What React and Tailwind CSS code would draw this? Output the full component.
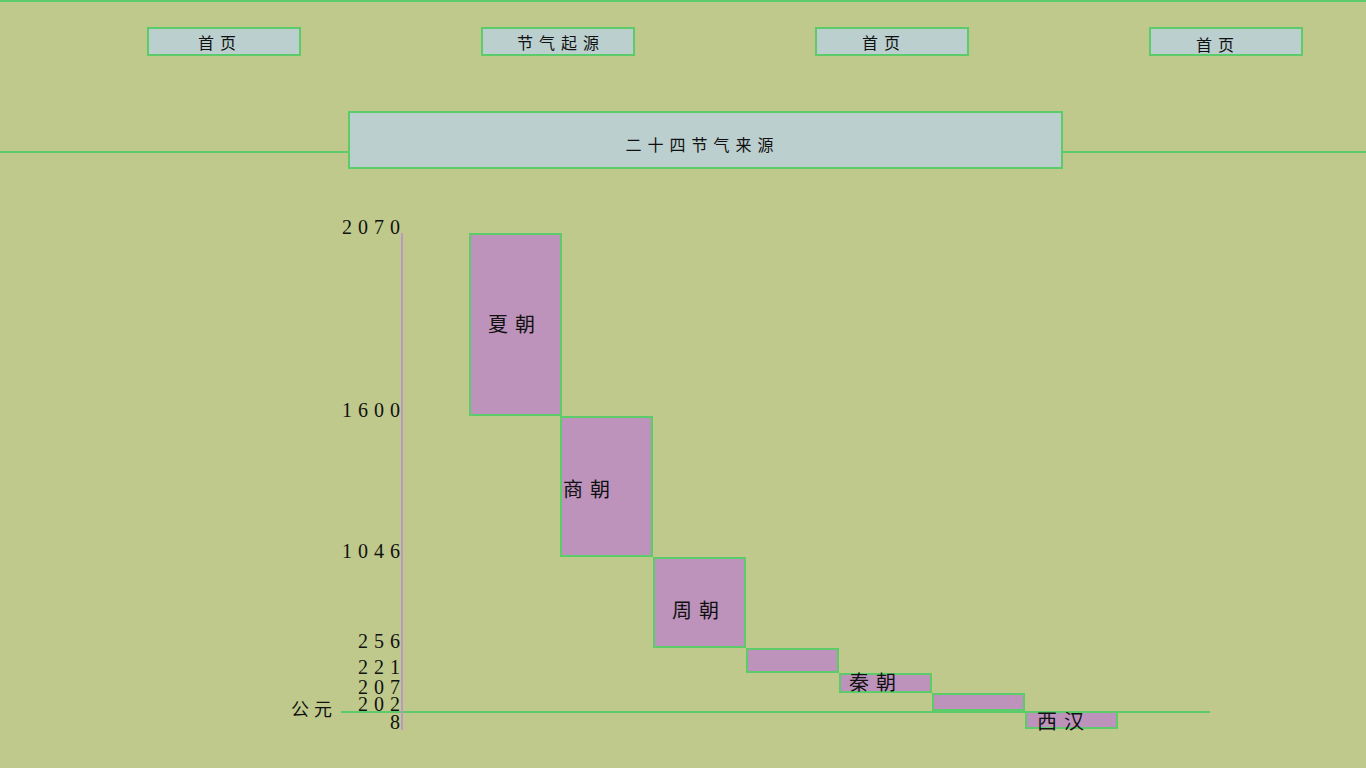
const TOP = 169;

const navItems = [
  { label: '首页', cls: 'pr-[14px]' },
  { label: '节气起源', cls: '' },
  { label: '首页', cls: 'pr-[22px]' },
  { label: '首页', cls: 'pr-[22px] pt-[4px]' },
];

// year ticks: label, vertical centre of the digits
const ticks = [
  ['2070', 226.5],
  ['1600', 409.5],
  ['1046', 551],
  ['256', 641],
  ['221', 667],
  ['207', 686.5],
  ['202', 704],
  ['8', 722],
];

// dynasty blocks, page coordinates
const blocks = [
  { x: 469, y: 233, w: 93, h: 183, label: '夏朝', lx: 488, ly: 325 },
  { x: 560, y: 416, w: 93, h: 141, label: '商朝', lx: 563, ly: 490 },
  { x: 653, y: 557, w: 93, h: 91, label: '周朝', lx: 672, ly: 611 },
  { x: 746, y: 648, w: 93, h: 25 },
  { x: 839, y: 673, w: 93, h: 20, label: '秦朝', lx: 849, ly: 683 },
  { x: 932, y: 693, w: 93, h: 18 },
  { x: 1025, y: 711, w: 93, h: 18, label: '西汉', lx: 1037, ly: 721.5 },
];

const cjk = "font-['Noto_Sans_CJK_SC',sans-serif]";
const serif = "font-['Liberation_Serif',serif]";

function NavButton({ label, cls }) {
  return (
    <div
      className={`flex h-[29px] w-[154px] items-center justify-center border-2 border-[#5ccc6a] bg-[#bbcfcf] text-[16px] leading-none tracking-[6px] text-[#111] ${cls}`}
    >
      <span className="pl-[6px]">{label}</span>
    </div>
  );
}

export default function App() {
  return (
    <div className={`min-h-screen overflow-hidden border-t-2 border-[#5ccc6a] bg-[#bfc98c] ${cjk}`}>
      <div className="flex gap-[180px] pl-[147px] pt-[25px]">
        {navItems.map((item, i) => (
          <NavButton key={i} label={item.label} cls={item.cls} />
        ))}
      </div>

      <div className="mt-[55px] flex items-start">
        <div className="mt-[40px] h-[2px] w-[348px] bg-[#5ccc6a]" />
        <div className="flex h-[58px] w-[715px] justify-center border-2 border-[#5ccc6a] bg-[#bbcfcf] pr-[6px] pt-[23px] text-[16px] leading-none tracking-[6px] text-[#111]">
          <span>二十四节气来源</span>
        </div>
        <div className="mt-[40px] h-[2px] flex-1 bg-[#5ccc6a]" />
      </div>

      <div className="relative h-[599px]">
        {/* baseline */}
        <div
          className="absolute h-[2px] bg-[#5ccc6a]"
          style={{ left: 341, top: 711 - TOP, width: 869 }}
        />
        {/* axis */}
        <div
          className="absolute w-[2px] bg-[#bc98c4]"
          style={{ left: 401, top: 233 - TOP, height: 497 }}
        />

        {ticks.map(([t, cy]) => (
          <div
            key={t}
            className={`absolute w-[120px] text-right text-[20px] leading-5 tracking-[6px] text-[#111] ${serif}`}
            style={{ left: 286, top: cy - 10 - TOP }}
          >
            {t}
          </div>
        ))}

        <div
          className="absolute text-[18px] leading-none tracking-[5px] text-[#111]"
          style={{ left: 291, top: 709 - 10 - TOP }}
        >
          公元
        </div>

        {blocks.map((b, i) => (
          <div
            key={i}
            className="absolute box-border border-2 border-[#5ccc6a] bg-[#bd93bc]"
            style={{ left: b.x, top: b.y - TOP, width: b.w, height: b.h }}
          />
        ))}

        {blocks
          .filter((b) => b.label)
          .map((b) => (
            <div
              key={b.label}
              className="absolute whitespace-nowrap text-[20px] leading-none tracking-[7px] text-[#111]"
              style={{ left: b.lx, top: b.ly - 11 - TOP }}
            >
              {b.label}
            </div>
          ))}
      </div>
    </div>
  );
}
